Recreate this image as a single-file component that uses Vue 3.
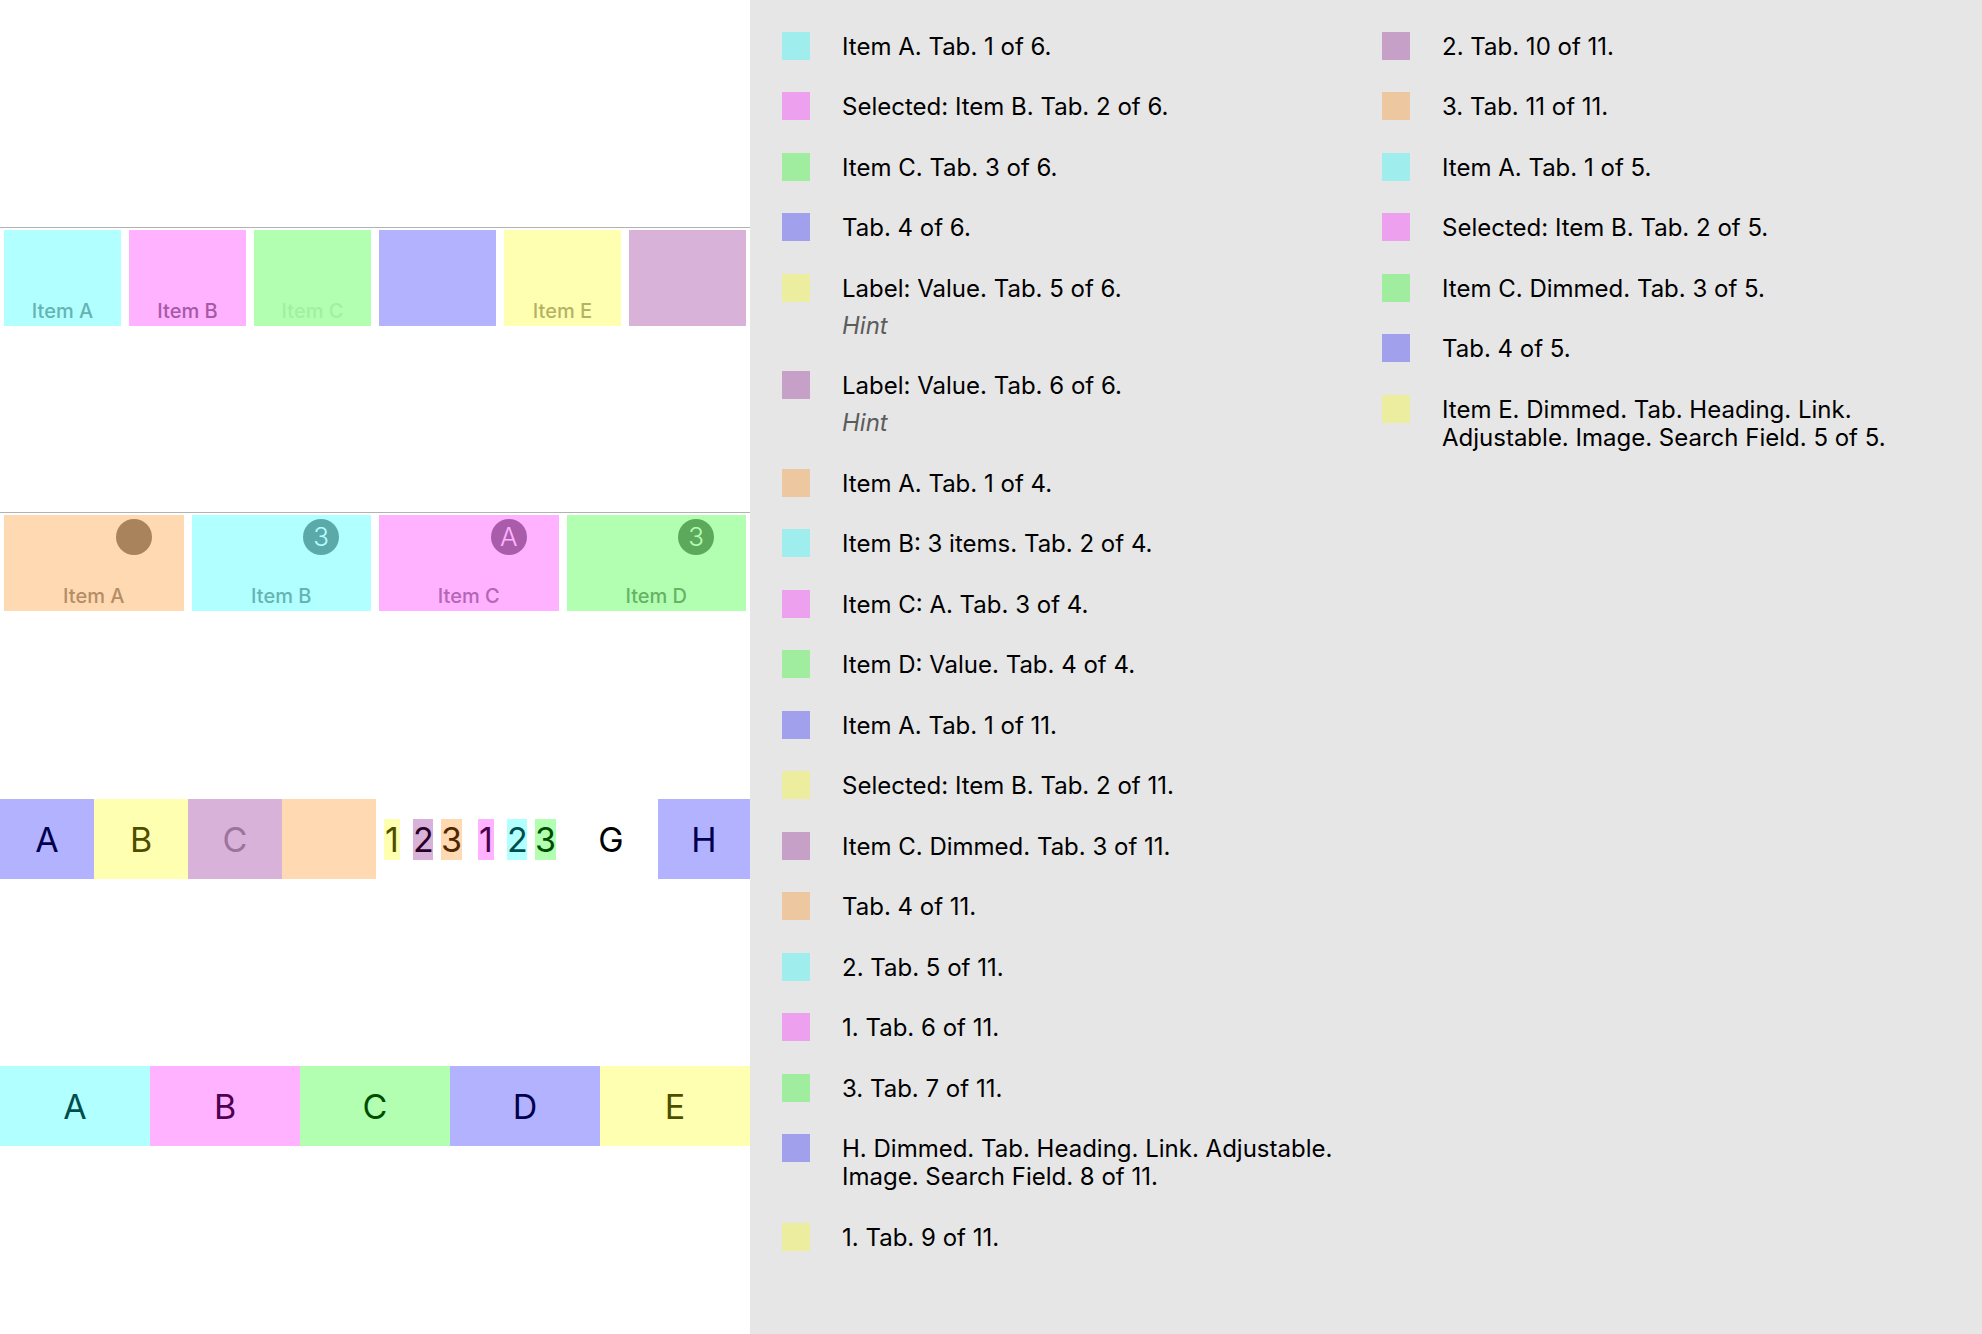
<script setup>
const mainTabs = [
  { label: 'Item A', tint: 'cyan' },
  { label: 'Item B', tint: 'magenta', state: 'selected' },
  { label: 'Item C', tint: 'green', state: 'dimmed' },
  { label: '', tint: 'blue', name: 'Tab' },
  { label: 'Item E', tint: 'yellow' },
  { label: '', tint: 'purple', name: 'Label' },
]

const badgeTabs = [
  { label: 'Item A', tint: 'orange', badge: '' },
  { label: 'Item B', tint: 'cyan', badge: '3' },
  { label: 'Item C', tint: 'magenta', badge: 'A' },
  { label: 'Item D', tint: 'green', badge: '3' },
]

const segments = [
  { label: 'A', tint: 'blue' },
  { label: 'B', tint: 'yellow' },
  { label: 'C', tint: 'purple', state: 'faded' },
  { label: '', tint: 'orange' },
  { group: [['1', 'yellow'], ['2', 'purple'], ['3', 'orange']] },
  { group: [['1', 'magenta'], ['2', 'cyan'], ['3', 'green']] },
  { label: 'G', tint: 'none' },
  { label: 'H', tint: 'blue' },
]

const letters = [
  ['A', 'cyan'],
  ['B', 'magenta'],
  ['C', 'green'],
  ['D', 'blue'],
  ['E', 'yellow'],
]

const legend = [
  [
    { tint: 'cyan', text: 'Item A. Tab. 1 of 6.' },
    { tint: 'magenta', text: 'Selected: Item B. Tab. 2 of 6.' },
    { tint: 'green', text: 'Item C. Tab. 3 of 6.' },
    { tint: 'blue', text: 'Tab. 4 of 6.' },
    { tint: 'yellow', text: 'Label: Value. Tab. 5 of 6.', hint: 'Hint' },
    { tint: 'purple', text: 'Label: Value. Tab. 6 of 6.', hint: 'Hint' },
    { tint: 'orange', text: 'Item A. Tab. 1 of 4.' },
    { tint: 'cyan', text: 'Item B: 3 items. Tab. 2 of 4.' },
    { tint: 'magenta', text: 'Item C: A. Tab. 3 of 4.' },
    { tint: 'green', text: 'Item D: Value. Tab. 4 of 4.' },
    { tint: 'blue', text: 'Item A. Tab. 1 of 11.' },
    { tint: 'yellow', text: 'Selected: Item B. Tab. 2 of 11.' },
    { tint: 'purple', text: 'Item C. Dimmed. Tab. 3 of 11.' },
    { tint: 'orange', text: 'Tab. 4 of 11.' },
    { tint: 'cyan', text: '2. Tab. 5 of 11.' },
    { tint: 'magenta', text: '1. Tab. 6 of 11.' },
    { tint: 'green', text: '3. Tab. 7 of 11.' },
    { tint: 'blue', text: 'H. Dimmed. Tab. Heading. Link. Adjustable. Image. Search Field. 8 of 11.' },
    { tint: 'yellow', text: '1. Tab. 9 of 11.' },
  ],
  [
    { tint: 'purple', text: '2. Tab. 10 of 11.' },
    { tint: 'orange', text: '3. Tab. 11 of 11.' },
    { tint: 'cyan', text: 'Item A. Tab. 1 of 5.' },
    { tint: 'magenta', text: 'Selected: Item B. Tab. 2 of 5.' },
    { tint: 'green', text: 'Item C. Dimmed. Tab. 3 of 5.' },
    { tint: 'blue', text: 'Tab. 4 of 5.' },
    { tint: 'yellow', text: 'Item E. Dimmed. Tab. Heading. Link. Adjustable. Image. Search Field. 5 of 5.' },
  ],
]
</script>

<template>
  <main class="page">
    <section class="preview">
      <nav class="tab-bar first-bar">
        <button
          v-for="(tab, i) in mainTabs"
          :key="i"
          type="button"
          class="tab tinted"
          :class="[tab.tint, tab.state]"
          :aria-label="tab.name"
        >{{ tab.label }}</button>
      </nav>

      <nav class="tab-bar second-bar">
        <button
          v-for="tab in badgeTabs"
          :key="tab.label"
          type="button"
          class="tab tinted"
          :class="tab.tint"
        >
          <span class="badge">{{ tab.badge }}</span>
          {{ tab.label }}
        </button>
      </nav>

      <div class="segments mixed">
        <template v-for="(seg, i) in segments" :key="i">
          <div v-if="seg.group" class="group">
            <button
              v-for="[digit, tint] in seg.group"
              :key="digit"
              type="button"
              class="digit tinted"
              :class="tint"
            >{{ digit }}</button>
          </div>
          <button
            v-else
            type="button"
            class="segment tinted"
            :class="[seg.tint, seg.state]"
            :aria-label="seg.label ? undefined : 'Tab'"
          >{{ seg.label }}</button>
        </template>
      </div>

      <div class="segments even">
        <button
          v-for="[letter, tint] in letters"
          :key="letter"
          type="button"
          class="segment tinted"
          :class="tint"
        >{{ letter }}</button>
      </div>
    </section>

    <aside class="legend">
      <ul v-for="(column, c) in legend" :key="c">
        <li v-for="item in column" :key="item.text">
          <span class="swatch tinted" :class="item.tint"></span>
          <div class="description">
            <p>{{ item.text }}</p>
            <p v-if="item.hint" class="hint">{{ item.hint }}</p>
          </div>
        </li>
      </ul>
    </aside>
  </main>
</template>

<style>
body {
  margin: 0;
  background: #fff;
}
</style>

<style scoped>
.page {
  display: grid;
  grid-template-columns: 750fr 1232fr;
  min-height: 100vh;
  font-family: Inter, "Liberation Sans", sans-serif;
  color: #000;
}

button {
  margin: 0;
  padding: 0;
  border: 0;
  background: none;
  font: inherit;
  color: inherit;
}

/* The tint lies over the element, so it colours its text as well. */
.tinted {
  position: relative;
}

.tinted::after {
  content: "";
  position: absolute;
  inset: 0;
  background: var(--tint);
}

.cyan { --tint: rgba(0, 255, 255, 0.3); }
.magenta { --tint: rgba(255, 0, 255, 0.3); }
.green { --tint: rgba(0, 255, 0, 0.3); }
.blue { --tint: rgba(0, 0, 255, 0.3); }
.yellow { --tint: rgba(255, 255, 0, 0.3); }
.purple { --tint: rgba(128, 0, 128, 0.3); }
.orange { --tint: rgba(255, 128, 0, 0.3); }
.none { --tint: transparent; }

.preview {
  min-width: 0;
}

.tab-bar {
  display: flex;
  gap: 8px;
  padding: 2px 4px 0;
  border-top: 1px solid #b2b2b2;
}

.first-bar {
  margin-top: 227px;
}

.second-bar {
  margin-top: 186px;
}

.tab {
  display: flex;
  flex: 1 1 0;
  align-items: flex-end;
  justify-content: center;
  height: 96px;
  padding-bottom: 3px;
  font-size: 20px;
  font-weight: 500;
  line-height: 24px;
  color: #929292;
}

.tab.selected {
  color: #808080;
}

.tab.dimmed {
  color: #e8e8e8;
}

.badge {
  position: absolute;
  top: 4px;
  left: calc(50% + 22px);
  width: 36px;
  height: 36px;
  border-radius: 50%;
  background: #858585;
  color: #fff;
  font-size: 26px;
  font-weight: 300;
  line-height: 36px;
  text-align: center;
}

.segments {
  display: grid;
  height: 80px;
  font-size: 34px;
}

.mixed {
  grid-template-columns: repeat(7, 94fr) 92fr;
  margin-top: 188px;
}

.even {
  grid-template-columns: repeat(5, 1fr);
  margin-top: 187px;
}

.faded {
  color: #a8a8a8;
}

.group {
  display: flex;
  align-items: center;
  justify-content: center;
  gap: 8px;
}

.digit {
  width: 20px;
  height: 41px;
  line-height: 41px;
}

.digit:first-child {
  width: 16px;
  margin-right: 5px;
}

.digit:last-child {
  width: 21px;
}

.legend {
  display: grid;
  grid-template-columns: 1fr 1fr;
  gap: 32px;
  align-items: start;
  padding: 32px;
  background: #e6e6e6;
  font-size: 24px;
  line-height: 28px;
}

ul {
  margin: 0;
  padding: 0;
  list-style: none;
}

li {
  display: flex;
  gap: 32px;
  margin-bottom: 31px;
}

li:nth-child(even) {
  margin-bottom: 32px;
}

.swatch {
  flex: none;
  width: 28px;
  height: 28px;
}

.description {
  padding-top: 1px;
}

p {
  margin: 0;
}

.hint {
  margin-top: 9px;
  font-style: italic;
  color: #5c5c5c;
}
</style>
